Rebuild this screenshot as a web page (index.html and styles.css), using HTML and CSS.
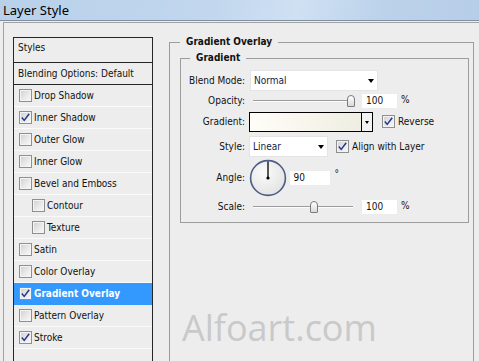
FILE: index.html
```html
<!DOCTYPE html>
<html>
<head>
<meta charset="utf-8">
<title>Layer Style</title>
<link rel="stylesheet" href="styles.css">
</head>
<body>
<div class="window">
  <div class="titlebar"><span class="title">Layer Style</span></div>
  <div class="frame">
    <div class="styles-list">
      <div class="list-head">Styles</div>
      <div class="list-blend">Blending Options: Default</div>
      <div class="item"><span class="cb"></span><span>Drop Shadow</span></div>
      <div class="item"><span class="cb"><svg class="tick" viewBox="0 0 11 11"><path d="M1.8 5.6 L4.2 8.4 L9.2 1.8"/></svg></span><span>Inner Shadow</span></div>
      <div class="item"><span class="cb"></span><span>Outer Glow</span></div>
      <div class="item"><span class="cb"></span><span>Inner Glow</span></div>
      <div class="item"><span class="cb"></span><span>Bevel and Emboss</span></div>
      <div class="item sub"><span class="cb"></span><span>Contour</span></div>
      <div class="item sub"><span class="cb"></span><span>Texture</span></div>
      <div class="item"><span class="cb"></span><span>Satin</span></div>
      <div class="item"><span class="cb"></span><span>Color Overlay</span></div>
      <div class="item active"><span class="cb"><svg class="tick" viewBox="0 0 11 11"><path d="M1.8 5.6 L4.2 8.4 L9.2 1.8"/></svg></span><span>Gradient Overlay</span></div>
      <div class="item"><span class="cb"></span><span>Pattern Overlay</span></div>
      <div class="item"><span class="cb"><svg class="tick" viewBox="0 0 11 11"><path d="M1.8 5.6 L4.2 8.4 L9.2 1.8"/></svg></span><span>Stroke</span></div>
    </div>

    <fieldset class="group outer">
      <legend>Gradient Overlay</legend>
      <fieldset class="group inner">
        <legend>Gradient</legend>

        <div class="row r1">
          <span class="lbl">Blend Mode:</span>
          <div class="select blend-sel"><span class="sel-text">Normal</span><i class="arrow"></i></div>
        </div>

        <div class="row r2">
          <span class="lbl">Opacity:</span>
          <div class="slider"><div class="track"></div><div class="thumb" style="left: 98px"></div></div>
          <div class="num">100</div>
          <span class="unit">%</span>
        </div>

        <div class="row r3">
          <span class="lbl">Gradient:</span>
          <div class="grad">
            <div class="swatch"></div>
            <div class="grad-btn"><i class="arrow small"></i></div>
          </div>
          <span class="cb chk-rev"><svg class="tick" viewBox="0 0 11 11"><path d="M1.8 5.6 L4.2 8.4 L9.2 1.8"/></svg></span>
          <span class="chk-label">Reverse</span>
        </div>

        <div class="row r4">
          <span class="lbl">Style:</span>
          <div class="select style-sel"><span class="sel-text">Linear</span><i class="arrow"></i></div>
          <span class="cb chk-align"><svg class="tick" viewBox="0 0 11 11"><path d="M1.8 5.6 L4.2 8.4 L9.2 1.8"/></svg></span>
          <span class="chk-label">Align with Layer</span>
        </div>

        <div class="row r5">
          <span class="lbl">Angle:</span>
          <svg class="dial" width="38" height="38" viewBox="0 0 38 38">
            <defs>
              <radialGradient id="dialFill" cx="40%" cy="35%" r="70%">
                <stop offset="0" stop-color="#fbfbfb"/>
                <stop offset="1" stop-color="#e2e2e2"/>
              </radialGradient>
            </defs>
            <circle cx="19" cy="19" r="17.4" fill="url(#dialFill)" stroke="#4d5d86" stroke-width="1.6"/>
            <line x1="19" y1="19" x2="19" y2="2.4" stroke="#000" stroke-width="1.3"/>
            <circle cx="19" cy="19" r="1.6" fill="#000"/>
          </svg>
          <div class="num angle-num">90</div>
          <span class="deg">°</span>
        </div>

        <div class="row r6">
          <span class="lbl">Scale:</span>
          <div class="slider"><div class="track"></div><div class="thumb" style="left: 61px"></div></div>
          <div class="num">100</div>
          <span class="unit">%</span>
        </div>
      </fieldset>
      <div class="watermark">Alfoart.com</div>
    </fieldset>
  </div>
</div>
</body>
</html>
```

FILE: styles.css
```css
html, body {
  margin: 0;
  padding: 0;
  background: #ededed;
}

.window {
  width: 479px;
  height: 361px;
  overflow: hidden;
  background: #ededed;
  font-family: "DejaVu Sans Condensed", "DejaVu Sans", sans-serif;
  font-stretch: condensed;
  font-size: 10px;
  color: #111;
}

.titlebar {
  height: 21px;
  box-sizing: border-box;
  border-bottom: 1px solid #7f90a4;
  background: linear-gradient(100deg, #b8d0ea 0%, #c2d7ee 45%, #cfe0f2 62%, #bcd2ea 80%, #b7cee8 100%);
  display: flex;
  align-items: center;
  padding-left: 3px;
}

.title {
  font-family: "Noto Sans", "Open Sans", sans-serif;
  font-stretch: normal;
  font-size: 13px;
  color: #000;
  line-height: 14px;
  margin-top: -1px;
}

.frame {
  margin: 1px 0 0 3px;
  border-top: 1px solid #a2a2a2;
  border-left: 1px solid #a2a2a2;
  padding: 13px 0 0 9px;
  display: flex;
  align-items: flex-start;
  gap: 16px;
  height: 400px;
}

/* ---------- styles list ---------- */
.styles-list {
  margin-top: 1px;
  width: 140px;
  flex: none;
  box-sizing: border-box;
  border: 1px solid #262626;
  border-bottom: none;
  height: 400px;
}

.list-head {
  height: 25px;
  box-sizing: border-box;
  padding: 4px 0 0 4px;
  line-height: 12px;
  border-bottom: 1px solid #262626;
}

.list-blend {
  height: 21px;
  line-height: 21px;
  padding-left: 4px;
  border-bottom: 1px solid #262626;
}

.item {
  height: 21px;
  display: flex;
  align-items: center;
  gap: 2px;
  padding-left: 5px;
  border-bottom: 1px solid #fafafa;
}

.item.sub {
  padding-left: 18px;
}

.item.active {
  background: #3399ff;
  border-bottom-color: #3399ff;
  color: #fff;
  font-weight: bold;
}

.cb {
  width: 13px;
  height: 13px;
  flex: none;
  box-sizing: border-box;
  border: 1px solid #8e8f8f;
  background: linear-gradient(135deg, #cfcfcf 0%, #e9e9e9 55%, #f9f9f9 100%);
  box-shadow: inset 0 0 0 1px #f3f3f3;
  display: flex;
  align-items: center;
  justify-content: center;
}

.tick {
  width: 11px;
  height: 11px;
}

.tick path {
  fill: none;
  stroke: #24378c;
  stroke-width: 1.5;
}

/* ---------- group boxes ---------- */
.group {
  margin: 0;
  border: 1px solid #9d9d9d;
  min-width: 0;
}

.group > legend {
  font-weight: bold;
  line-height: 12px;
  padding: 0 6px;
  color: #111;
}

.outer {
  width: 305px;
  flex: none;
  box-sizing: border-box;
  padding: 4px 4px 0 10px;
  height: 400px;
}

.inner {
  width: 289px;
  box-sizing: border-box;
  padding: 5px 0 4px 0;
}

.inner > legend {
  margin-left: 9px;
}

/* ---------- rows ---------- */
.row {
  display: flex;
  align-items: center;
}

.r1 { height: 22px; }
.r2 { height: 19px; }
.r3 { height: 23px; }
.r4 { height: 27px; }
.r5 { height: 35px; }
.r6 { height: 23px; }

.lbl {
  width: 64px;
  flex: none;
  text-align: right;
  margin-right: 4px;
}

.select {
  height: 21px;
  box-sizing: border-box;
  background: #fff;
  border: 1px solid #e4e4e4;
  display: flex;
  align-items: center;
  justify-content: space-between;
  padding: 0 3px 0 3px;
  flex: none;
}

.sel-text {
  color: #14224a;
}

.blend-sel {
  width: 128px;
  margin-left: 1px;
}

.style-sel {
  width: 79px;
}

.arrow {
  width: 0;
  height: 0;
  border-left: 3.5px solid transparent;
  border-right: 3.5px solid transparent;
  border-top: 4px solid #000;
  margin-top: 1px;
}

.arrow.small {
  border-left-width: 2.5px;
  border-right-width: 2.5px;
  border-top-width: 3px;
}

.slider {
  position: relative;
  width: 108px;
  height: 14px;
  flex: none;
}

.track {
  position: absolute;
  left: 4px;
  right: 4px;
  top: 6px;
  height: 0;
  border-top: 1px solid #9b9b9b;
  border-bottom: 1px solid #fdfdfd;
}

.thumb {
  position: absolute;
  top: 1px;
  width: 8px;
  height: 12px;
  box-sizing: border-box;
  border: 1px solid #7c7c7c;
  border-radius: 4px 4px 1px 1px;
  background: linear-gradient(#ffffff, #d9d9d9);
}

.num {
  width: 37px;
  height: 16px;
  box-sizing: border-box;
  background: #fff;
  border: 1px solid #ececec;
  padding-left: 4px;
  line-height: 14px;
  margin-left: 4px;
  flex: none;
}

.unit {
  margin-left: 3px;
  margin-top: -2px;
}

.grad {
  display: flex;
  height: 20px;
  flex: none;
}

.swatch {
  width: 113px;
  box-sizing: border-box;
  border: 1px solid #000;
  background: linear-gradient(to right, #fffdf8, #efeee2);
}

.grad-btn {
  width: 11px;
  box-sizing: border-box;
  border: 1px solid #000;
  border-left: none;
  background: #f2f2f2;
  display: flex;
  align-items: center;
  justify-content: center;
}

.chk-rev {
  margin-left: 9px;
}

.chk-align {
  margin-left: 8px;
}

.chk-label {
  margin-left: 3px;
}

.dial {
  flex: none;
  margin-left: -0.5px;
}

.angle-num {
  width: 42px;
  margin-left: 2px;
}

.deg {
  margin-left: 4px;
  margin-top: -8px;
}

.watermark {
  margin-top: 87px;
  padding-left: 2px;
  font-family: "Open Sans", "DejaVu Sans", sans-serif;
  font-stretch: normal;
  font-size: 36px;
  line-height: 36px;
  color: #c9c9c9;
}
```
